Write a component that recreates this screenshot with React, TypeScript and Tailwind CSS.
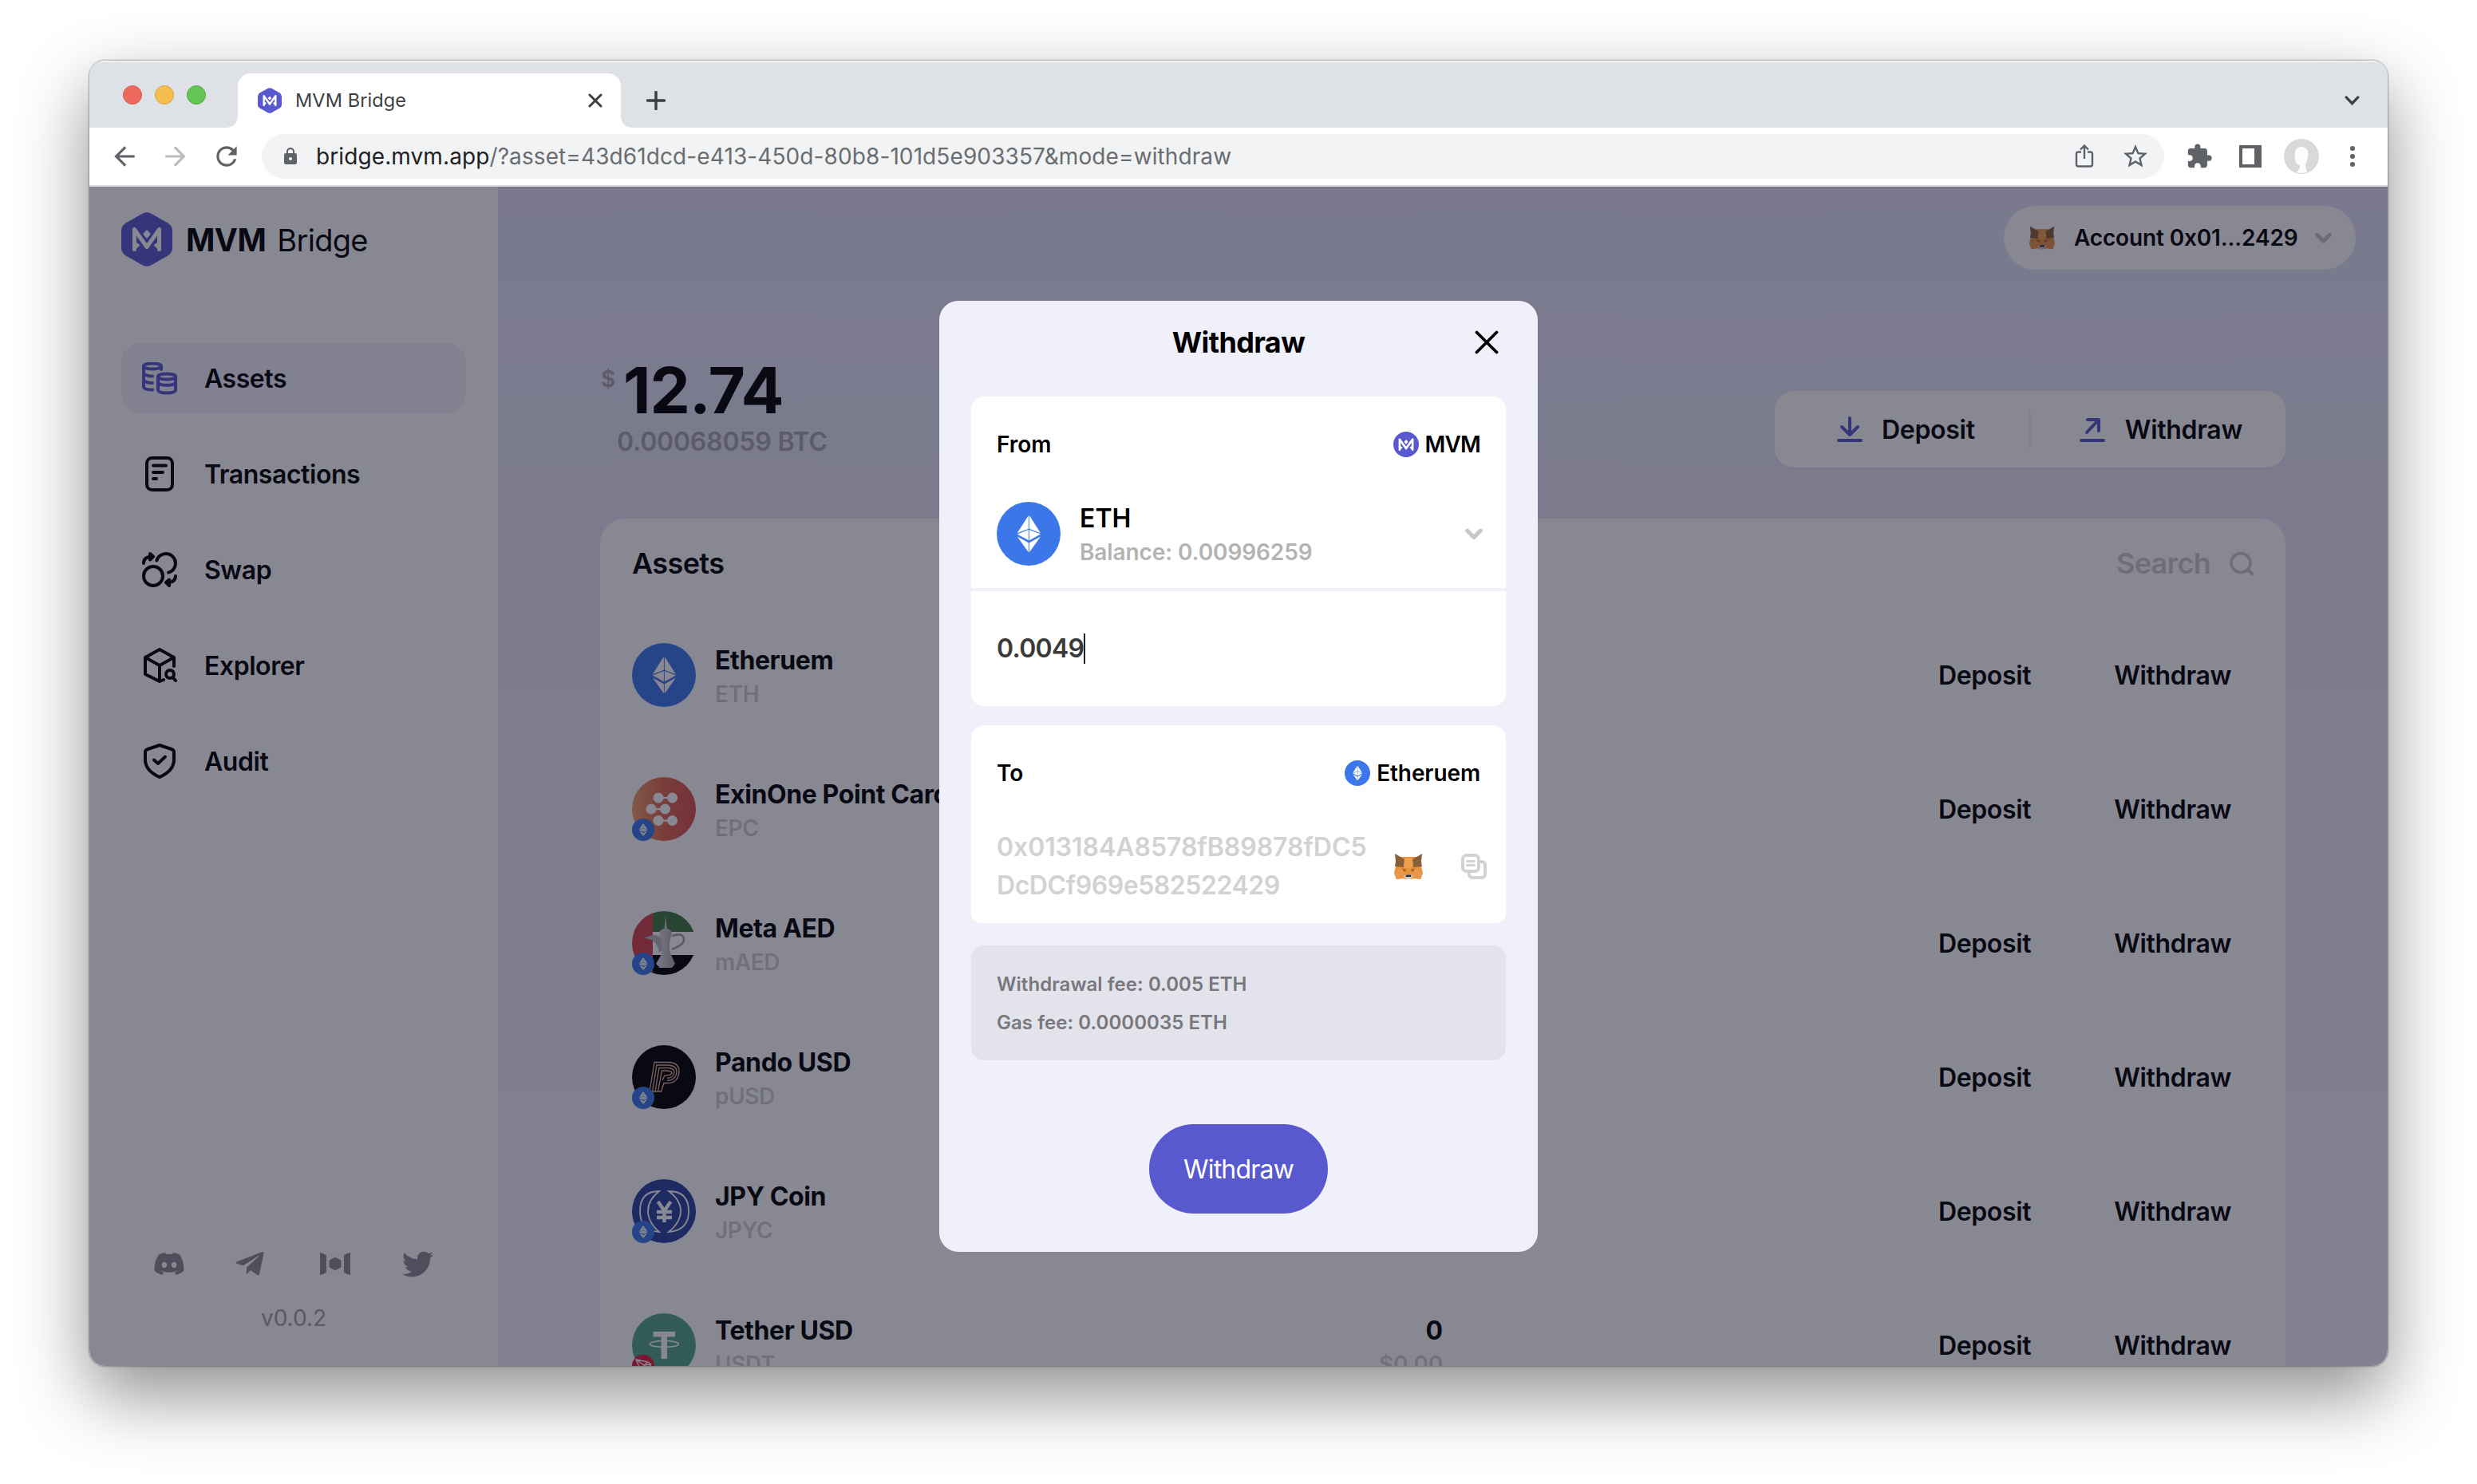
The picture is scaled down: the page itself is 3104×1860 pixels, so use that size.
import React from "react";
import { FaDiscord, FaTelegramPlane, FaTwitter } from "react-icons/fa";
import { MdArrowBack, MdArrowForward, MdExtension, MdLock, MdRefresh, MdStarBorder } from "react-icons/md";

const stroke = {
  fill: "none",
  stroke: "currentColor",
  strokeWidth: 4,
  strokeLinecap: "round" as const,
  strokeLinejoin: "round" as const,
};

function MvmMark() {
  return (
    <g>
      <path d="M16.4 46.5V21.5L32 43.5L47.6 21.5V46.5" fill="none" stroke="#fff" strokeWidth="5" strokeLinejoin="round" strokeLinecap="round" />
      <path d="M32 22l4.8 5.6L32 33l-4.800-5.400z" fill="#fff" />
      <path d="M16 36l7.500 5-7.500 8zM48 36l-7.500 5 7.500 8z" fill="#fff" />
    </g>
  );
}

function MvmHex({ className }: { className: string }) {
  return (
    <svg viewBox="0 0 64 68" className={className}>
      <path
        d="M27 1.6Q32-1 37 1.6L58 13.2Q64 17 64 23V45Q64 51 58 54.8L37 66.4Q32 69 27 66.4L6 54.8Q0 51 0 45V23Q0 17 6 13.2Z"
        fill="#5959cf"
      />
      <MvmMark />
    </svg>
  );
}

function EthCoin({ className }: { className: string }) {
  return (
    <svg viewBox="0 0 80 80" className={className}>
      <circle cx="40" cy="40" r="40" fill="#3b77e8" />
      <g fill="#fff">
        <path d="M39.9 17L25.6 39.2l14.3-5.4z" />
        <path d="M40.9 17L55 39.2l-14.1-5.4z" />
        <path d="M39.9 35L25.8 40.6l14.1 7.6z" />
        <path d="M40.9 35L55 40.6l-14.1 7.6z" />
        <path d="M39.9 51.2L25.8 43.6l14.1 19.6z" />
        <path d="M40.9 51.2L55 43.6 40.9 63.2z" />
      </g>
    </svg>
  );
}

function Fox({ className }: { className: string }) {
  return (
    <svg viewBox="0 0 36 32" className={className}>
      <path d="M5 4h26l3 12 2 8-3 8-9-1-2 1h-8l-2-1-9 1-3-8 2-8z" fill="#e9923c" />
      <path d="M1 0l14 8-3 9-11-1 1-6z" fill="#87603a" />
      <path d="M35 0L21 8l3 9 11-1-1-6z" fill="#87603a" />
      <path d="M13 6l5-1 5 1 1 10-6 3-6-3z" fill="#f0a04b" />
      <path d="M0 24l8-4 5 4 1 6-11 2z" fill="#e8964a" />
      <path d="M36 24l-8-4-5 4-1 6 11 2z" fill="#e8964a" />
      <path d="M10 18l5 1v4l-3-1zM26 18l-5 1v4l3-1z" fill="#d37b2c" />
      <path d="M11.500 19.500l2.800 1.500-2.400 .6zM24.500 19.500l-2.800 1.500 2.400 .6z" fill="#4a3a2c" />
      <path d="M12 28l3-2h6l3 2-3 4h-6z" fill="#d8cabd" />
      <path d="M15 26.500h6l.5 2.500h-7z" fill="#2a2c30" />
    </svg>
  );
}

function Chevron({ className }: { className: string }) {
  return (
    <svg viewBox="0 0 20 13" className={className}>
      <path d="M2.500 2.500L10 10L17.500 2.500" {...stroke} strokeWidth={4.6} />
    </svg>
  );
}

function EpcCoin() {
  return (
    <svg viewBox="0 0 80 80" className="size-20">
      <defs>
        <linearGradient id="epc" x1="0" x2="1" y1="0" y2="0">
          <stop offset="0" stopColor="#f0a068" />
          <stop offset=".5" stopColor="#e0694c" />
          <stop offset="1" stopColor="#d9504e" />
        </linearGradient>
      </defs>
      <circle cx="40" cy="40" r="40" fill="url(#epc)" />
      <g fill="#fff">
        <circle cx="33" cy="26" r="6.500" /><circle cx="50.500" cy="26" r="6.500" />
        <circle cx="24" cy="40" r="6.500" /><circle cx="41.500" cy="40" r="6.500" />
        <circle cx="33" cy="54.500" r="6.500" /><circle cx="50.500" cy="54.500" r="6.500" />
        <path d="M33 23.500q9 3 17.500 0v5q-9-3-17.500 0zM24 37.500q9 3 17.500 0v5q-9-3-17.500 0zM33 52q9 3 17.500 0v5q-9-3-17.500 0z" />
      </g>
    </svg>
  );
}

function AedCoin() {
  return (
    <svg viewBox="0 0 80 80" className="size-20">
      <defs>
        <clipPath id="aed"><circle cx="40" cy="40" r="40" /></clipPath>
        <linearGradient id="jug" x1="0" x2="1">
          <stop offset="0" stopColor="#e2e2e2" />
          <stop offset="1" stopColor="#a9a9ad" />
        </linearGradient>
      </defs>
      <g clipPath="url(#aed)">
        <rect width="80" height="80" fill="#fff" />
        <rect width="80" height="26" fill="#3f773f" />
        <rect y="55" width="80" height="25" fill="#000" />
        <rect width="26" height="80" fill="#d2434a" />
        <path d="M50 31q15-5 15 5 0 6-15 12" fill="none" stroke="#a0a0a6" strokeWidth="2.600" />
        <path d="M15 34q15-8 22 0l3 14-6 4q-3-18-19-18z" fill="#b9b9bd" />
        <path d="M34 27q1-4 6.500-5l1.500-16 2 16q5 1 6 5l-2 8q-2 8 0 17l6 14-4 5H35l-5-5 7-12q2-10-1-19z" fill="url(#jug)" />
      </g>
    </svg>
  );
}

function PandoCoin() {
  return (
    <svg viewBox="0 0 80 80" className="size-20">
      <circle cx="40" cy="40" r="40" fill="#000" />
      <g fill="none" stroke="#e8b596" strokeWidth="1.300">
        <path d="M22 58L28 21.500H46Q59 22 59 33Q58 47.500 45 47.500H40L36.500 58H22" />
        <path d="M25.500 58L31 25H45.500Q56 25.500 56 33.500Q55 44 44 44.500" />
        <path d="M29 58L34 28.500H45Q53 29 53 34Q52 41 44 41.500" />
        <path d="M32.500 58L37.500 32H44Q50 32.500 50 35Q49 38 41 38L38 44" />
      </g>
    </svg>
  );
}

function JpycCoin() {
  return (
    <svg viewBox="0 0 80 80" className="size-20">
      <circle cx="40" cy="40" r="40" fill="#28449c" />
      <g fill="none" stroke="#fff" strokeWidth="1.800">
        <path d="M34 15Q10 15 10 40Q10 64 34 66Q20 54 20 40Q20 26 34 15Z" />
        <path d="M46 15Q71 15 71 40Q71 64 46 66Q61 54 61 40Q61 26 46 15Z" />
      </g>
      <path d="M32.500 28L40.500 39.500L48.500 28M31 41H50M31 48H50M40.500 39V54" fill="none" stroke="#fff" strokeWidth="4.500" />
    </svg>
  );
}

function TetherCoin() {
  return (
    <svg viewBox="0 0 80 80" className="size-20">
      <circle cx="40" cy="40" r="40" fill="#53a48c" />
      <path d="M26.500 23H54V29.500H44V57H36.500V29.500H26.500Z" fill="#fff" />
      <ellipse cx="40.300" cy="38.500" rx="18" ry="4" fill="none" stroke="#fff" strokeWidth="1.600" />
    </svg>
  );
}

function TronBadge() {
  return (
    <svg viewBox="0 0 28 28" className="size-7">
      <circle cx="14" cy="14" r="14" fill="#e31b35" />
      <path d="M5 6L20 9L24 12L13 24ZM5 6L15 13L24 12M20 9L15 13L13 24" fill="none" stroke="#fff" strokeWidth="1.300" />
    </svg>
  );
}

const navIcons: Record<string, React.ReactNode> = {
  Assets: (
    <g {...stroke}>
      <ellipse cx="13" cy="5" rx="11" ry="3.600" />
      <path d="M2 5V31Q3 34.500 13 34.500M24 5V9M2 14Q5 17.500 13 17.500M2 22.500Q5 26 13 26" />
      <ellipse cx="31" cy="18" rx="11" ry="3.600" />
      <path d="M20 18V35Q21 38.500 31 38.500T42 35V18M20 25.500Q22 28.800 31 28.800T42 25.500" />
    </g>
  ),
  Transactions: (
    <g {...stroke}>
      <rect x="6" y="2" width="32" height="40" rx="6.500" />
      <path d="M14 11.500H30M14 20H26M14 28H18" />
    </g>
  ),
  Swap: (
    <g {...stroke}>
      <circle cx="14" cy="30" r="12" />
      <path d="M18.400 10.500A12 12 0 1 1 33 25.600" />
      <path d="M2 14Q2 6 12 5.500M10 2L14 5.500L10 9.500ZM42 30Q42 37 34 38M34 34.500L30 38L34 42Z" />
    </g>
  ),
  Explorer: (
    <g {...stroke}>
      <path d="M27 40L22 42L4 33V12L22 2L40 12V23M4 12L22 22L40 12M22 22V42" />
      <circle cx="35" cy="33" r="5" />
      <path d="M38.500 37L42 41" />
    </g>
  ),
  Audit: (
    <g {...stroke}>
      <path d="M22 2L37 7Q40 8 40 11V20Q40 34 22 42Q4 34 4 20V11Q4 8 7 7Z" />
      <path d="M15 20.500L20 25L29 16.500" />
    </g>
  ),
};

function NavItem({ label, active }: { label: string; active?: boolean }) {
  return (
    <div className={"flex h-[88px] items-center rounded-3xl pl-[26px] " + (active ? "bg-[#f3f1fa]" : "")}>
      <svg viewBox="0 0 44 44" className={"size-11 " + (active ? "mt-1 text-[#5959cf]" : "")}>
        {navIcons[label]}
      </svg>
      <span className="ml-[34px] mt-[2px] text-[32px] font-semibold tracking-[-0.45px]">{label}</span>
    </div>
  );
}

type Asset = { name: string; symbol: string; icon: React.ReactNode; badge?: React.ReactNode; amount?: string; value?: string };

const ethBadge = <EthCoin className="size-7" />;
const assets: Asset[] = [
  { name: "Etheruem", symbol: "ETH", icon: <EthCoin className="size-20" /> },
  { name: "ExinOne Point Card", symbol: "EPC", icon: <EpcCoin />, badge: ethBadge },
  { name: "Meta AED", symbol: "mAED", icon: <AedCoin />, badge: ethBadge },
  { name: "Pando USD", symbol: "pUSD", icon: <PandoCoin />, badge: ethBadge },
  { name: "JPY Coin", symbol: "JPYC", icon: <JpycCoin />, badge: ethBadge },
  { name: "Tether USD", symbol: "USDT", icon: <TetherCoin />, badge: <TronBadge />, amount: "0", value: "$0.00" },
];

function AssetRow({ a }: { a: Asset }) {
  return (
    <div className="flex h-[168px] items-center pr-[28px]">
      <div className="flex w-[1016px] items-center">
        <div className="relative size-20 shrink-0">
          {a.icon}
          {a.badge && <div className="absolute bottom-0 left-0">{a.badge}</div>}
        </div>
        <div className="ml-6 mt-[5px] whitespace-nowrap leading-[43px]">
          <div className="text-[32px] font-bold tracking-[-0.4px]">{a.name}</div>
          <div className="text-[28px] font-semibold tracking-[-0.4px] text-black/20">{a.symbol}</div>
        </div>
        <div className="ml-auto mt-[5px] text-right leading-[43px]">
          <div className="text-[32px] font-bold">{a.amount}</div>
          <div className="text-[28px] font-semibold tracking-[-0.2px] text-black/20">{a.value}</div>
        </div>
      </div>
      <div className="ml-auto mt-[2px] flex gap-[104px] text-[32px] font-semibold tracking-[-0.35px]">
        <span>Deposit</span>
        <span>Withdraw</span>
      </div>
    </div>
  );
}

function BrowserChrome() {
  return (
    <>
      <div className="flex h-[84px] items-end bg-[#dee1e6] shadow-[inset_0_2px_0_rgba(255,255,255,0.6)]">
        <div className="flex h-full w-[170px] items-center gap-4 pl-[42px] pt-[2px]">
          <div className="size-6 rounded-full border border-[#d8584d] bg-[#ed6a5e]" />
          <div className="size-6 rounded-full border border-[#d9a33f] bg-[#f5bf4f]" />
          <div className="size-6 rounded-full border border-[#52a73e] bg-[#62c554]" />
        </div>
        <svg viewBox="0 0 16 16" className="size-4 text-white"><path d="M16 0V16H0Q16 16 16 0Z" fill="currentColor" /></svg>
        <div className="flex h-[68px] w-[480px] items-center rounded-t-2xl bg-white pl-[25px] pr-[23px]">
          <MvmHex className="h-8 w-[30px]" />
          <span className="ml-[17px] text-[23.500px] tracking-[0.1px] text-[#3c4043]">MVM Bridge</span>
          <svg viewBox="0 0 18 18" className="ml-auto size-[18px] text-[#3c4043]"><path d="M2 2L16 16M16 2L2 16" fill="none" stroke="currentColor" strokeWidth="3" strokeLinecap="round" /></svg>
        </div>
        <svg viewBox="0 0 16 16" className="size-4 text-white"><path d="M0 0V16H16Q0 16 0 0Z" fill="currentColor" /></svg>
        <div className="flex h-[68px] items-center pl-4">
          <svg viewBox="0 0 24 24" className="size-6 text-[#3c4043]"><path d="M12 1.500V22.500M1.500 12H22.500" fill="none" stroke="currentColor" strokeWidth="3.500" strokeLinecap="round" /></svg>
        </div>
        <div className="ml-auto flex h-[68px] items-center pr-[35px]">
          <svg viewBox="0 0 20 13" className="h-[12px] w-[19px] text-[#3c4043]"><path d="M2 2L10 10.500L18 2" fill="none" stroke="currentColor" strokeWidth="3.500" strokeLinecap="round" /></svg>
        </div>
      </div>
      <div className="flex h-[74px] items-center border-b-2 border-[#dadce0] bg-white text-[#5f6368]">
        <div className="flex w-[216px] items-center gap-[26px] pl-[25px]">
          <MdArrowBack className="size-[38px]" />
          <MdArrowForward className="size-[38px] text-[#babcbe]" />
          <MdRefresh className="size-[38px]" />
        </div>
        <div className="flex h-14 w-[2384px] items-center rounded-full bg-[#f1f3f4] pl-6">
          <MdLock className="size-6" />
          <span className="ml-[20px] text-[28px] tracking-[0.1px] text-[#6a6d70]">
            <span className="text-[#202124]">bridge.mvm.app</span>/?asset=43d61dcd-e413-450d-80b8-101d5e903357&amp;mode=withdraw
          </span>
          <svg viewBox="0 0 24 30" className="ml-auto mr-[34px] h-[30px] w-6">
            <path d="M8 9.500H4.500Q2 9.500 2 12V25Q2 27.500 4.500 27.500H19.500Q22 27.500 22 25V12Q22 9.500 19.500 9.500H16M12 18V2M7 6.500L12 1.500L17 6.500" fill="none" stroke="currentColor" strokeWidth="2.400" />
          </svg>
          <MdStarBorder className="mr-[18px] size-[36px]" />
        </div>
        <div className="flex flex-1 items-center">
          <MdExtension className="ml-[27px] size-[34px]" />
          <div className="ml-[33px] h-[28px] w-[28px] border-[4px] border-r-[9px] border-[#5f6368]" />
          <svg viewBox="0 0 44 44" className="ml-[28px] size-11">
            <circle cx="22" cy="22" r="22" fill="#d9d9d9" />
            <path d="M13 20Q13 10 22 9.500Q31 10 31 19Q31 26 28 30Q27 36 30 42Q22 45 14 42Q19 40 20 34Q13 33 13 20Z" fill="#fcfcfc" stroke="#c5ccd4" strokeWidth=".6" />
          </svg>
          <div className="ml-[39px] flex w-[6px] flex-col gap-1">
            <i className="size-1.5 rounded-full bg-[#5f6368]" />
            <i className="size-1.5 rounded-full bg-[#5f6368]" />
            <i className="size-1.5 rounded-full bg-[#5f6368]" />
          </div>
        </div>
      </div>
    </>
  );
}

function Sidebar() {
  return (
    <aside className="flex w-[512px] flex-col bg-white px-10 pt-8">
      <div className="flex h-[68px] items-center">
        <MvmHex className="h-[68px] w-16" />
        <span className="ml-[17px] mt-[2px] text-[39px] font-bold tracking-[-0.5px]">MVM</span>
        <span className="ml-[14px] mt-[2px] text-[38px] tracking-[-0.7px]">Bridge</span>
      </div>
      <nav className="mt-24 flex flex-col gap-8">
        <NavItem label="Assets" active />
        <NavItem label="Transactions" />
        <NavItem label="Swap" />
        <NavItem label="Explorer" />
        <NavItem label="Audit" />
      </nav>
      <div className="mb-[40px] mt-auto">
        <div className="flex items-center pl-[40px] text-[#8a8a92]">
          <FaDiscord className="size-[40px]" />
          <FaTelegramPlane className="ml-[61px] size-[40px]" />
          <svg viewBox="0 0 38 28" className="ml-[68px] h-7 w-[38px]">
            <path d="M0 .5Q0-.2 .8 .1L8 3V25L.8 27.900Q0 28.200 0 27.500ZM38 .5Q38-.2 37.200 .1L30 3V25L37.200 27.900Q38 28.200 38 27.500ZM19 5.500L26.500 9.800V18.200L19 22.500L11.500 18.200V9.800Z" fill="currentColor" />
          </svg>
          <FaTwitter className="ml-[65px] size-[39px]" />
        </div>
        <div className="mt-[28px] text-center text-[28px] leading-10 text-[#a0a0a6]">v0.0.2</div>
      </div>
    </aside>
  );
}

function Main() {
  return (
    <main className="flex-1 overflow-hidden bg-linear-to-b from-[#e2e1f3] to-[#f2f1fa] pl-32 pr-10 pt-6">
      <div className="ml-auto flex h-20 w-[441px] items-center rounded-full bg-white pl-8 pr-[30px]">
        <Fox className="h-[30px] w-8" />
        <span className="ml-[24px] whitespace-nowrap text-[28px] font-semibold tracking-[-0.15px]">Account 0x01...2429</span>
        <Chevron className="ml-auto h-[15px] w-[21px] text-[#c4c4c8]" />
      </div>
      <div className="mr-[88px]">
        <div className="mt-[110px] flex h-[138px] items-end justify-between">
          <div className="self-start">
            <div className="flex items-start">
              <span className="w-[29px] pl-px text-[28px] font-semibold leading-[55px] text-[#a4a4ac]">$</span>
              <span className="text-[80px] font-bold leading-[81px] tracking-[-1px]">12.74</span>
            </div>
            <div className="ml-[21px] mt-[5px] text-[32px] font-semibold leading-10 tracking-[-0.2px] text-[#a4a4ac]">0.00068059 BTC</div>
          </div>
          <div className="flex h-24 w-[640px] items-center rounded-3xl bg-white text-[32px] font-semibold tracking-[-0.3px] shadow-[0_2px_4px_rgba(0,0,0,0.03)]">
            <svg viewBox="0 0 32 32" className="ml-[78px] size-8 text-[#5959cf]">
              <path d="M16 2V22M6 13L16 23L26 13M2 30H30" {...stroke} />
            </svg>
            <span className="ml-[24px] mt-[2px]">Deposit</span>
            <div className="ml-auto h-12 w-[3px] bg-[#f3f2f8]" />
            <svg viewBox="0 0 32 32" className="ml-[61px] size-8 text-[#5959cf]">
              <path d="M10 4H24V18M23 5L9 20M2 30H30" {...stroke} />
            </svg>
            <span className="ml-[25px] mr-[54px] mt-[2px]">Withdraw</span>
          </div>
        </div>
        <section className="mt-16 h-[1200px] rounded-[32px] bg-white px-10">
          <div className="flex h-28 items-center">
            <h2 className="text-[36px] font-semibold tracking-[-0.6px]">Assets</h2>
            <span className="ml-auto text-[36px] font-semibold tracking-[-0.7px] text-[#cbcbcf]">Search</span>
            <svg viewBox="0 0 30 30" className="ml-[24px] size-[30px] text-[#cbcbcf]">
              <circle cx="14" cy="14.500" r="12" fill="none" stroke="currentColor" strokeWidth="3.600" />
              <path d="M23 23.500L28 28" {...stroke} />
            </svg>
          </div>
          {assets.map((a) => (
            <AssetRow key={a.name} a={a} />
          ))}
        </section>
      </div>
    </main>
  );
}

function WithdrawModal() {
  return (
    <div className="h-[1192px] w-[750px] rounded-3xl bg-[#f0f0fa] px-10 text-black">
      <div className="grid h-[120px] grid-cols-[1fr_auto_1fr] items-center pb-4">
        <span />
        <h1 className="text-[36px] font-bold tracking-[-0.6px]">Withdraw</h1>
        <svg viewBox="0 0 30 30" className="mr-[9px] size-[30px] justify-self-end">
          <path d="M2.500 2.500L27.500 27.500M27.500 2.500L2.500 27.500" fill="none" stroke="#000" strokeWidth="3.800" strokeLinecap="round" />
        </svg>
      </div>

      <div className="h-[388px] rounded-2xl bg-white">
        <div className="flex h-[120px] items-center px-8 text-[28px] font-semibold">
          <span>From</span>
          <svg viewBox="0 0 32 32" className="ml-auto size-8">
            <circle cx="16" cy="16" r="16" fill="#5959cf" />
            <g transform="translate(-.6 -1.500) scale(.52)"><MvmMark /></g>
          </svg>
          <span className="ml-[7px] tracking-[-0.8px]">MVM</span>
        </div>
        <div className="flex h-[124px] items-center border-b-4 border-[#f0f0fa] pb-4 pl-8 pr-[29px]">
          <EthCoin className="size-20" />
          <div className="ml-6 mt-[4px] leading-[43px]">
            <div className="text-[32px] font-semibold">ETH</div>
            <div className="text-[28px] font-semibold tracking-[-0.1px] text-[#b3b3b3]">Balance: 0.00996259</div>
          </div>
          <Chevron className="ml-auto h-[15px] w-[22px] text-[#c8c8c8]" />
        </div>
        <div className="flex h-[144px] items-center px-8">
          <span className="text-[32px] font-semibold tracking-[-0.7px] text-[#3a3a3a]">0.0049</span>
          <i className="h-[38px] w-[2px] bg-[#222]" />
        </div>
      </div>

      <div className="mt-6 h-[248px] overflow-hidden rounded-t-2xl rounded-b-xl">
        <div className="h-[252px] rounded-2xl bg-white">
          <div className="flex h-[120px] items-center px-8 text-[28px] font-semibold">
            <span>To</span>
            <EthCoin className="ml-auto size-8" />
            <span className="ml-2 tracking-[-0.1px]">Etheruem</span>
          </div>
          <div className="flex items-center pl-8 pr-6 pt-[9px]">
            <div className="w-[470px] whitespace-nowrap text-[32px] font-semibold leading-[48px] text-[#d2d2d2]">
              <div className="tracking-[-0.05px]">0x013184A8578fB89878fDC5</div>
              <div className="tracking-[-0.45px]">DcDCf969e582522429</div>
            </div>
            <Fox className="ml-[28px] h-8 w-9" />
            <svg viewBox="0 0 32 32" className="ml-auto size-8 text-[#d2d2d2]">
              <rect x="2" y="2" width="20" height="20" rx="4.500" {...stroke} />
              <path d="M25 10H25.500Q30 10 30 14.500V25.500Q30 30 25.500 30H14.500Q10 30 10 25.500" {...stroke} />
              <path d="M7.500 9.500H16.500M7.500 14.500H16.500" {...stroke} strokeWidth={2.800} />
            </svg>
          </div>
        </div>
      </div>

      <div className="mt-7 flex h-[144px] flex-col justify-center rounded-2xl bg-[#e3e3ec] px-8 pt-px text-[24px] font-semibold leading-[48px] tracking-[0.05px] text-[#77777d]">
        <div>Withdrawal fee: 0.005 ETH</div>
        <div>Gas fee: 0.0000035 ETH</div>
      </div>

      <div className="mx-auto mt-20 flex h-28 w-56 items-center justify-center rounded-full bg-[#5959cf] pt-px text-[32px] tracking-[-0.8px] text-white">
        Withdraw
      </div>
    </div>
  );
}

export default function App() {
  return (
    <div className="h-[1860px] w-[3104px] overflow-hidden bg-white pl-[112px] pt-[76px] font-['Inter',sans-serif] text-black">
      <div className="flex h-[1636px] w-[2880px] flex-col overflow-hidden rounded-[20px] shadow-[0_0_2px_1px_rgba(0,0,0,0.3),0_36px_90px_rgba(0,0,0,0.45)]">
        <BrowserChrome />
        <div className="relative flex flex-1 overflow-hidden">
          <Sidebar />
          <Main />
          <div className="absolute inset-0 flex items-center justify-center bg-[rgba(18,18,40,0.5)]">
            <WithdrawModal />
          </div>
        </div>
      </div>
    </div>
  );
}
